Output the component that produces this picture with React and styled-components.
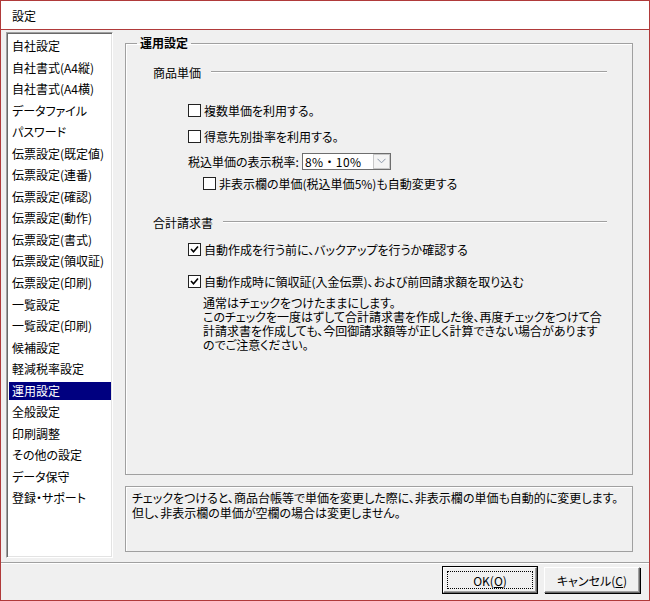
import React from 'react';
import styled, { createGlobalStyle } from 'styled-components';

const GlobalStyle = createGlobalStyle`
  html, body {
    margin: 0;
    padding: 0;
    background: #ffffff;
  }
  body {
    font-family: "Noto Sans CJK JP", "Noto Sans", sans-serif;
    font-size: 12px;
    color: #000;
    font-feature-settings: "palt";
  }
  * {
    box-sizing: border-box;
  }
`;

const MENU_ITEMS = [
  '自社設定',
  '自社書式(A4縦)',
  '自社書式(A4横)',
  'データファイル',
  'パスワード',
  '伝票設定(既定値)',
  '伝票設定(連番)',
  '伝票設定(確認)',
  '伝票設定(動作)',
  '伝票設定(書式)',
  '伝票設定(領収証)',
  '伝票設定(印刷)',
  '一覧設定',
  '一覧設定(印刷)',
  '候補設定',
  '軽減税率設定',
  '運用設定',
  '全般設定',
  '印刷調整',
  'その他の設定',
  'データ保守',
  '登録・サポート',
];

const NOTE_LINES = [
  '通常はチェックをつけたままにします。',
  'このチェックを一度はずして合計請求書を作成した後、再度チェックをつけて合',
  '計請求書を作成しても、今回御請求額等が正しく計算できない場合があります',
  'のでご注意ください。',
];

const HELP_LINES = [
  'チェックをつけると、商品台帳等で単価を変更した際に、非表示欄の単価も自動的に変更します。',
  '但し、非表示欄の単価が空欄の場合は変更しません。',
];

const Window = styled.div`
  width: 650px;
  height: 601px;
  border: 1px solid #b03a3a;
  background: #ffffff;
  display: flex;
  flex-direction: column;
`;

const TitleBar = styled.div`
  height: 29px;
  flex: none;
  display: flex;
  align-items: center;
  padding-left: 11px;
  border-bottom: 1px solid #b03a3a;
  font-size: 12px;
`;

const Body = styled.div`
  flex: 1;
  background: #f0f0f0;
  display: flex;
  flex-direction: column;
`;

const Main = styled.div`
  height: 532px;
  display: flex;
  align-items: flex-start;
  gap: 12px;
  padding: 2px 0 0 5px;
`;

const MenuList = styled.ul`
  list-style: none;
  margin: 0;
  width: 107px;
  height: 526px;
  padding: 4px 0 0 0;
  background: #ffffff;
  border: 1px solid;
  border-color: #a0a0a0 #ffffff #ffffff #a0a0a0;
  box-shadow: inset 1px 1px 0 #696969, inset -1px -1px 0 #e3e3e3;
`;

const MenuItem = styled.li`
  height: 18px;
  line-height: 18px;
  margin: 0 1px 3.55px 2px;
  padding-left: 3px;
  white-space: nowrap;
  background: ${p => (p.active ? '#000080' : 'transparent')};
  color: ${p => (p.active ? '#ffffff' : '#000000')};
`;

const RightColumn = styled.div`
  width: 508px;
  padding-top: 3px;
  display: flex;
  flex-direction: column;
  gap: 11px;
`;

const GroupBox = styled.fieldset`
  margin: 0;
  padding: 0 0 0 27px;
  height: 440px;
  border: 1px solid #a0a0a0;
  box-shadow: inset 1px 1px 0 #ffffff;
`;

const GroupTitle = styled.legend`
  margin-left: -16px;
  padding: 0 3px;
  font-weight: bold;
  line-height: 16px;
  font-size: 12px;
`;

const SectionHeader = styled.div`
  display: flex;
  align-items: center;
  height: 16px;
  margin-top: ${p => p.top}px;
  margin-right: 25px;
  gap: 10px;

  &::after {
    content: '';
    flex: 1;
    height: 0;
    border-top: 1px solid #a0a0a0;
    border-bottom: 1px solid #ffffff;
  }
`;

const Row = styled.div`
  display: flex;
  align-items: center;
  height: 16px;
  margin-top: ${p => p.top}px;
  margin-left: ${p => p.indent}px;
  white-space: nowrap;
`;

const Box = styled.span`
  width: 13px;
  height: 13px;
  flex: none;
  margin-right: 3px;
  border: 1px solid #222222;
  background: #ffffff;
  display: flex;
  align-items: center;
  justify-content: center;
`;

const FieldLabel = styled.span`
  margin-right: 3px;
`;

const Combo = styled.div`
  width: 89px;
  height: 17px;
  display: flex;
  align-items: center;
  border: 1px solid #6e6e6e;
  background: #ffffff;
`;

const ComboValue = styled.span`
  flex: 1;
  padding-left: 2px;
  line-height: 15px;
  font-feature-settings: normal;
  letter-spacing: 0.4px;
`;

const ComboButton = styled.span`
  width: 17px;
  height: 15px;
  border: 1px solid #c8c8c8;
  background: #f4f4f4;
  display: flex;
  align-items: center;
  justify-content: center;
`;

const Note = styled.div`
  margin: 7px 0 0 50px;
  line-height: 14px;
`;

const NoteLine = styled.div`
  white-space: nowrap;
  height: 14px;
`;

const HelpBox = styled.div`
  height: 66px;
  padding: 3px 6px;
  border: 1px solid #a0a0a0;
  box-shadow: inset 1px 1px 0 #ffffff;
  line-height: 15px;
`;

const Footer = styled.div`
  flex: 1;
  display: flex;
  justify-content: flex-end;
  align-items: flex-start;
  gap: 7px;
  padding: 4px 9px 0 0;
  border-top: 1px solid #a0a0a0;
  box-shadow: inset 0 1px 0 #ffffff;
`;

const Button = styled.button`
  width: ${p => p.w}px;
  height: 26px;
  padding: 0;
  font-family: inherit;
  font-size: 12px;
  font-feature-settings: "palt";
  color: #000;
  background: #f0f0f0;
  border: 1px solid;
  border-color: #ffffff #696969 #696969 #ffffff;
  box-shadow: ${p =>
    p.primary
      ? '0 0 0 1px #000000, inset -1px -1px 0 #a0a0a0'
      : 'inset -1px -1px 0 #a0a0a0, 1px 1px 0 #000000'};
  display: flex;
  align-items: center;
  justify-content: center;
  position: relative;

  ${p =>
    p.primary &&
    `
    &::after {
      content: '';
      position: absolute;
      inset: 3px;
      border: 1px dotted #000;
    }
  `}
`;

const CheckMark = () => (
  <svg width="9" height="9" viewBox="0 0 9 9">
    <polyline points="1,4 3.5,6.8 8,1.5" fill="none" stroke="#000" strokeWidth="1.6" />
  </svg>
);

const Chevron = () => (
  <svg width="9" height="6" viewBox="0 0 9 6">
    <polyline points="0.5,0.8 4.5,4.8 8.5,0.8" fill="none" stroke="#8a96a8" strokeWidth="1" />
  </svg>
);

const Checkbox = ({ checked, children, top, indent }) => (
  <Row top={top} indent={indent}>
    <Box>{checked && <CheckMark />}</Box>
    <span>{children}</span>
  </Row>
);

export default function App() {
  return (
    <>
      <GlobalStyle />
      <Window>
        <TitleBar>設定</TitleBar>
        <Body>
          <Main>
            <MenuList>
              {MENU_ITEMS.map(item => (
                <MenuItem key={item} active={item === '運用設定'}>
                  {item}
                </MenuItem>
              ))}
            </MenuList>
            <RightColumn>
              <GroupBox>
                <GroupTitle>運用設定</GroupTitle>
                <SectionHeader top={13}>商品単価</SectionHeader>
                <Checkbox top={22} indent={35}>
                  複数単価を利用する。
                </Checkbox>
                <Checkbox top={10} indent={35}>
                  得意先別掛率を利用する。
                </Checkbox>
                <Row top={9} indent={35}>
                  <FieldLabel>税込単価の表示税率:</FieldLabel>
                  <Combo>
                    <ComboValue>8%・10%</ComboValue>
                    <ComboButton>
                      <Chevron />
                    </ComboButton>
                  </Combo>
                </Row>
                <Checkbox top={6} indent={50}>
                  非表示欄の単価(税込単価5%)も自動変更する
                </Checkbox>
                <SectionHeader top={23}>合計請求書</SectionHeader>
                <Checkbox checked top={11} indent={35}>
                  自動作成を行う前に、バックアップを行うか確認する
                </Checkbox>
                <Checkbox checked top={16} indent={35}>
                  自動作成時に領収証(入金伝票)、および前回請求額を取り込む
                </Checkbox>
                <Note>
                  {NOTE_LINES.map(line => (
                    <NoteLine key={line}>{line}</NoteLine>
                  ))}
                </Note>
              </GroupBox>
              <HelpBox>
                {HELP_LINES.map(line => (
                  <div key={line}>{line}</div>
                ))}
              </HelpBox>
            </RightColumn>
          </Main>
          <Footer>
            <Button primary w={94}>
              OK(<u>O</u>)
            </Button>
            <Button w={96}>
              キャンセル(<u>C</u>)
            </Button>
          </Footer>
        </Body>
      </Window>
    </>
  );
}
